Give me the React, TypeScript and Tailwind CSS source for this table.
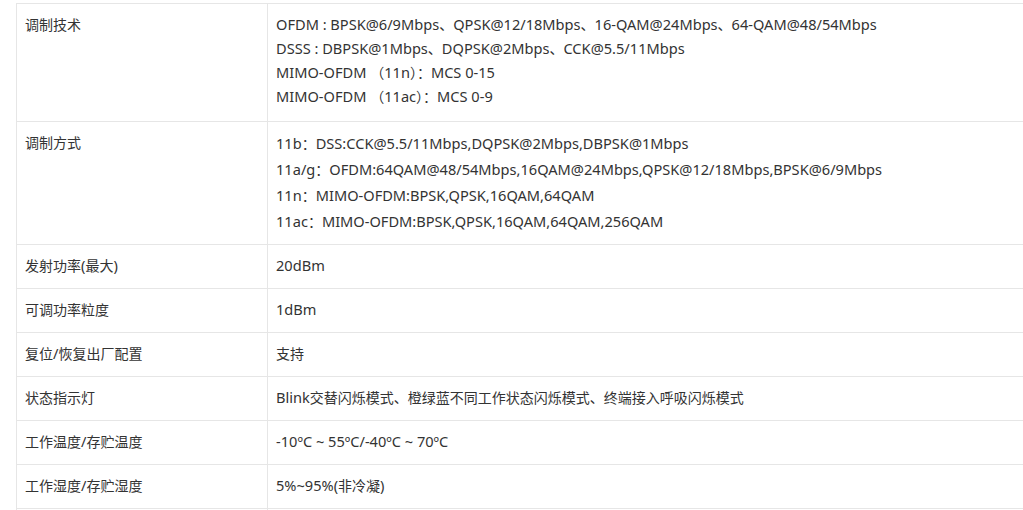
const rows: { label: string; lines: string[]; lh: string; pb: string }[] = [
  {
    label: "调制技术",
    lines: [
      "OFDM : BPSK@6/9Mbps、QPSK@12/18Mbps、16-QAM@24Mbps、64-QAM@48/54Mbps",
      "DSSS : DBPSK@1Mbps、DQPSK@2Mbps、CCK@5.5/11Mbps",
      "MIMO-OFDM （11n）：MCS 0-15",
      "MIMO-OFDM （11ac）：MCS 0-9",
    ],
    lh: "h-6 leading-6",
    pb: "pb-[13px]",
  },
  {
    label: "调制方式",
    lines: [
      "11b：DSS:CCK@5.5/11Mbps,DQPSK@2Mbps,DBPSK@1Mbps",
      "11a/g：OFDM:64QAM@48/54Mbps,16QAM@24Mbps,QPSK@12/18Mbps,BPSK@6/9Mbps",
      "11n：MIMO-OFDM:BPSK,QPSK,16QAM,64QAM",
      "11ac：MIMO-OFDM:BPSK,QPSK,16QAM,64QAM,256QAM",
    ],
    lh: "h-[26px] leading-[26px]",
    pb: "pb-[10px]",
  },
  { label: "发射功率(最大)", lines: ["20dBm"], lh: "h-6 leading-6", pb: "pb-[11px]" },
  { label: "可调功率粒度", lines: ["1dBm"], lh: "h-6 leading-6", pb: "pb-[11px]" },
  { label: "复位/恢复出厂配置", lines: ["支持"], lh: "h-6 leading-6", pb: "pb-[11px]" },
  {
    label: "状态指示灯",
    lines: ["Blink交替闪烁模式、橙绿蓝不同工作状态闪烁模式、终端接入呼吸闪烁模式"],
    lh: "h-6 leading-6",
    pb: "pb-[11px]",
  },
  { label: "工作温度/存贮温度", lines: ["-10ºC ~ 55ºC/-40ºC ~ 70ºC"], lh: "h-6 leading-6", pb: "pb-[11px]" },
  { label: "工作湿度/存贮湿度", lines: ["5%~95%(非冷凝)"], lh: "h-6 leading-6", pb: "pb-[11px]" },
  { label: "", lines: [""], lh: "h-6 leading-6", pb: "pb-[11px]" },
];

// latin runs look a bit wider in the original font, so bump them slightly
function Mixed({ text }: { text: string }) {
  const parts = text.split(/([\u3000-\u9fff\uff00-\uffef]+)/);
  return (
    <>
      {parts.map((p, k) =>
        /[\u3000-\u9fff\uff00-\uffef]/.test(p) ? (
          <span key={k}>{p}</span>
        ) : (
          <span key={k} className="text-[14.6px]">
            {p}
          </span>
        )
      )}
    </>
  );
}

export default function App() {
  return (
    <div
      className="h-[510px] w-full overflow-hidden bg-white pl-4 pt-[3px] text-[14px] text-[#333333]"
      style={{ fontFamily: '"Noto Sans", "Noto Sans CJK SC", sans-serif' }}
    >
      <div className="border-l border-t border-[#e6e6e6]">
        {rows.map((row, i) => (
          <div key={i} className="grid grid-cols-[251px_1fr] border-b border-[#e6e6e6]">
            <div className={`border-r border-[#e6e6e6] px-2 pt-2 ${row.pb}`}>
              <div className="h-6 leading-6 whitespace-nowrap">
                <Mixed text={row.label} />
              </div>
            </div>
            <div className={`px-2 pt-2 ${row.pb} whitespace-nowrap`}>
              {row.lines.map((line, j) => (
                <div key={j} className={row.lh}>
                  <Mixed text={line} />
                </div>
              ))}
            </div>
          </div>
        ))}
      </div>
    </div>
  );
}
